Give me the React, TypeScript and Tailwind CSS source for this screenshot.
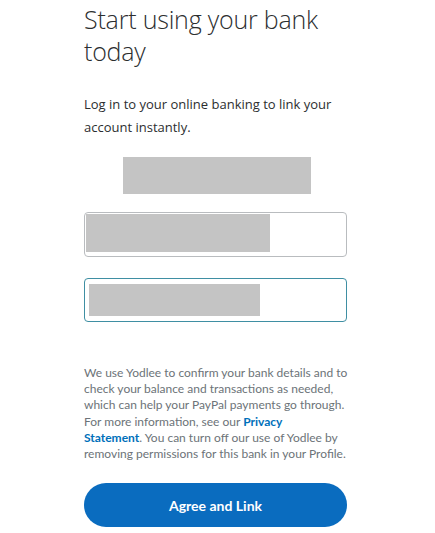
import React from "react";

export default function App() {
  return (
    <div className="min-h-[533px] w-[435px] bg-white">
      <div className="pl-[84px] w-[347px] font-['Open_Sans',sans-serif]">
        <h1 className="pt-[3px] text-[25px] leading-[32px] font-light text-[#2c2e2f] tracking-[-0.2px]">
          Start using your bank
          <br />
          today
        </h1>
        <p className="mt-[26px] text-[13px] leading-[23px] text-[#2c2e2f]">
          Log in to your online banking to link your account instantly.
        </p>
        <div className="mt-[18px] ml-[39px] h-[37px] w-[188px] bg-[#c4c4c4]" />
        <div className="mt-[18px] h-[45px] w-[263px] rounded-[4px] border border-[#b9bcbf] pl-[1px] pt-[1px]">
          <div className="h-[38px] w-[184px] bg-[#c4c4c4]" />
        </div>
        <div className="mt-[21px] h-[44px] w-[263px] rounded-[4px] border border-[#3f8fa3] pl-[4px] pt-[5px]">
          <div className="h-[32px] w-[171px] bg-[#c4c4c4]" />
        </div>
        <p className="mt-[43px] whitespace-nowrap font-['Lato',sans-serif] text-[12px] leading-[16.2px] text-[#6c7378]">
          We use Yodlee to confirm your bank details and to
          <br />
          check your balance and transactions as needed,
          <br />
          which can help your PayPal payments go through.
          <br />
          For more information, see our{" "}
          <a className="font-bold text-[#0070ba]">
            Privacy
            <br />
            Statement
          </a>
          . You can turn off our use of Yodlee by
          <br />
          removing permissions for this bank in your Profile.
        </p>
        <button className="mt-[21px] flex h-[44px] w-[263px] items-center justify-center rounded-full bg-[#0a6cbf] font-['Lato',sans-serif] text-[14px] font-bold text-white">
          Agree and Link
        </button>
      </div>
    </div>
  );
}
